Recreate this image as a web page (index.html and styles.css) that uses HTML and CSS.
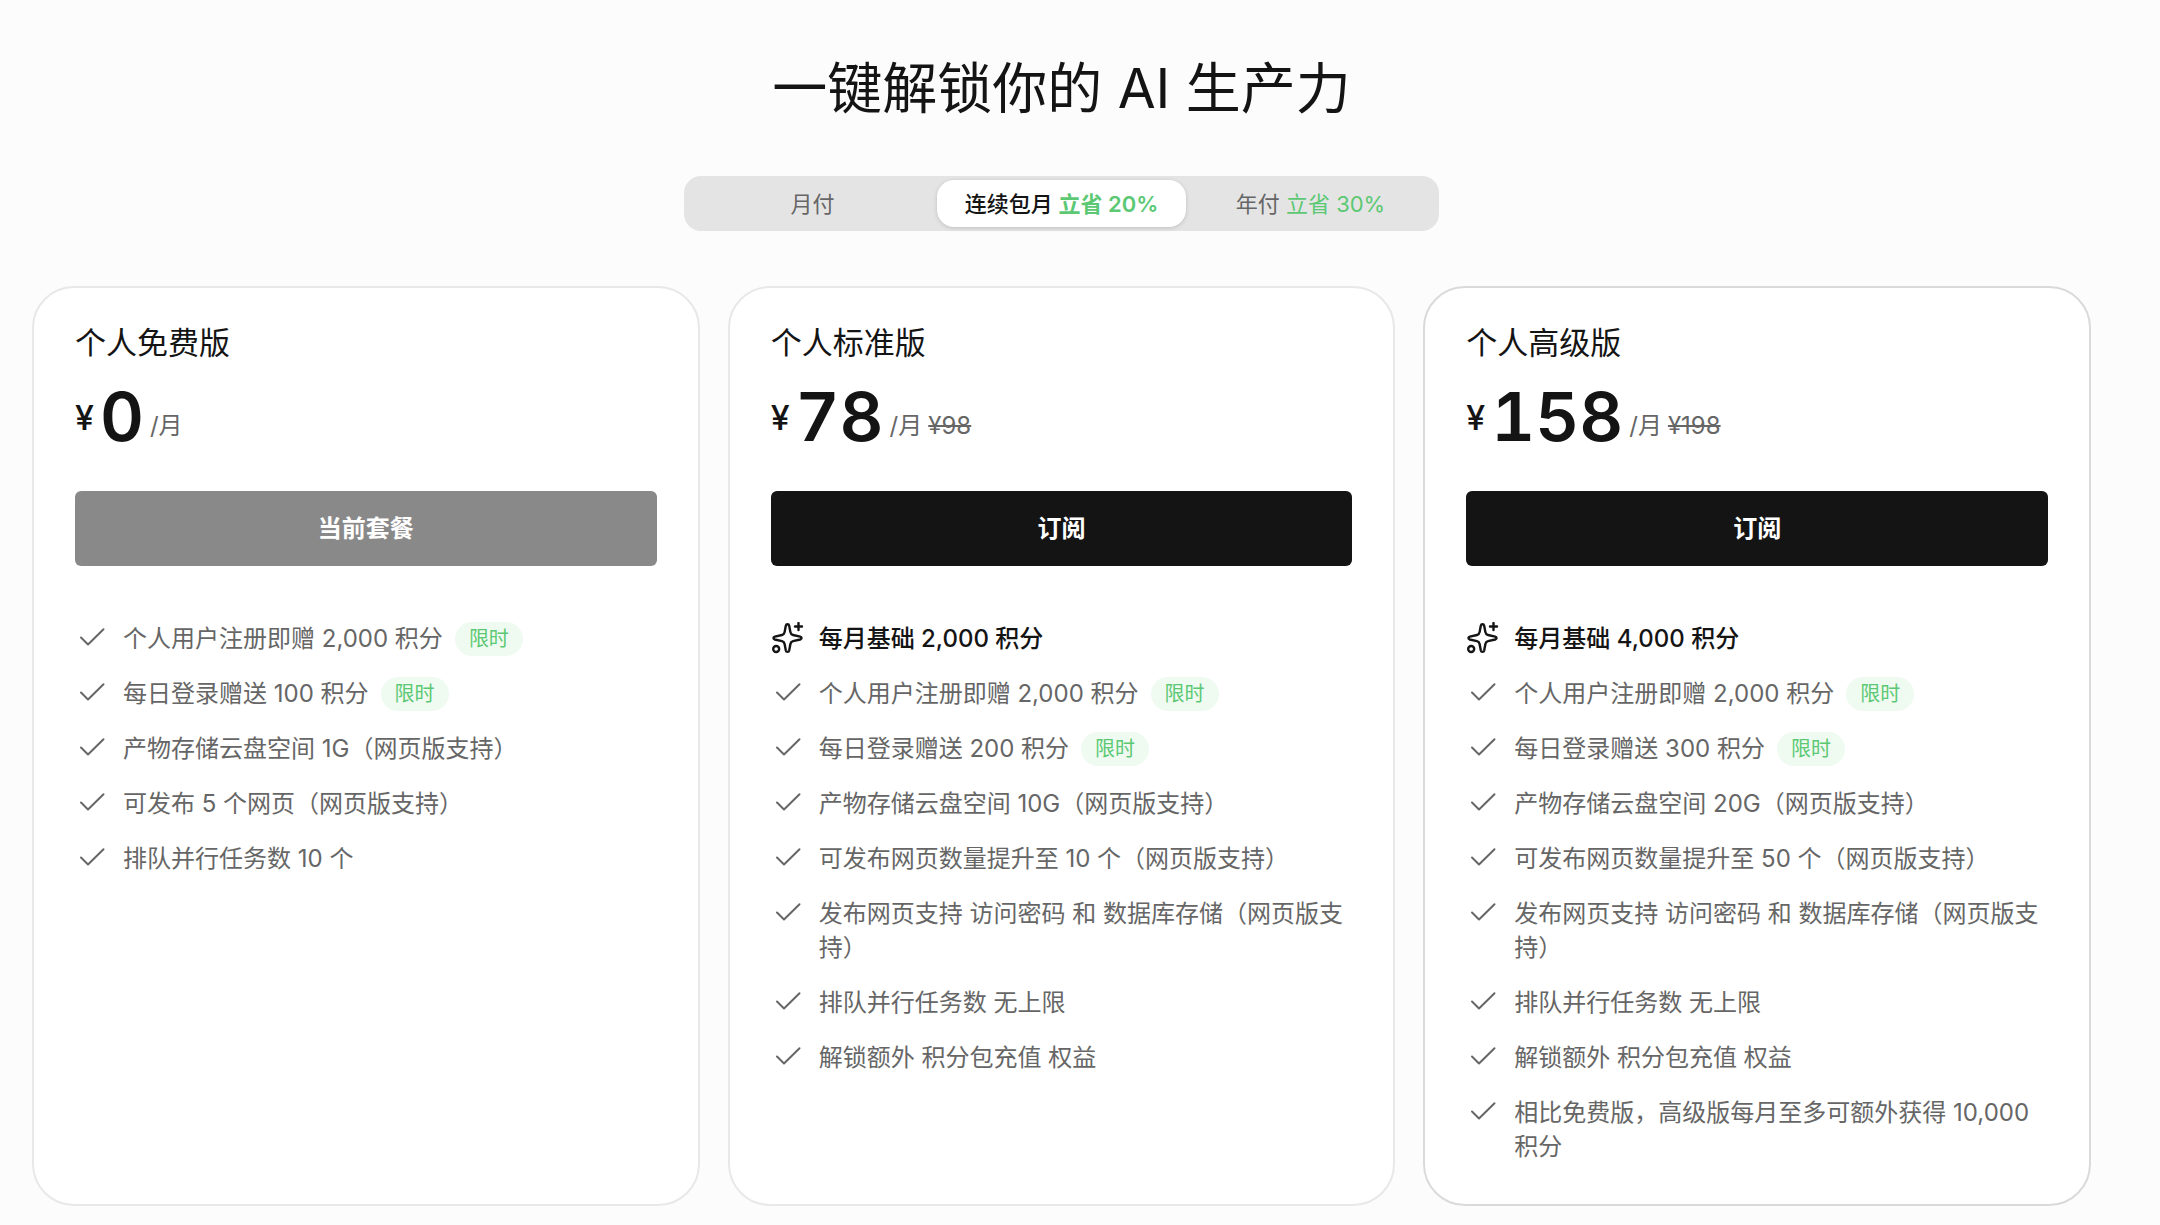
FILE: index.html
```html
<!DOCTYPE html>
<html lang="zh-CN">
<head>
<meta charset="utf-8">
<meta name="viewport" content="width=device-width, initial-scale=1">
<title>一键解锁你的 AI 生产力</title>
<link rel="stylesheet" href="styles.css">
</head>
<body>
<svg class="sprite" aria-hidden="true">
  <symbol id="check" viewBox="0 0 32 32"><path d="M5 15.500l7 7L27.500 7.200"/></symbol>
  <symbol id="spark" viewBox="0 0 32 32">
    <path d="M15.500 2.200c-.9 0-1.500.6-1.700 1.500l-1.200 6.400c-.3 1.700-.9 2.500-2.600 2.900l-7.200 1.700c-1.800.5-1.800 2.300 0 2.800l7.200 1.600c1.700.4 2.300 1.200 2.600 2.900l1.200 6.400c.4 1.900 3 1.900 3.400 0l1.200-6.400c.3-1.700.9-2.500 2.600-2.900l7.200-1.600c1.800-.5 1.800-2.300 0-2.800L21 13c-1.700-.4-2.300-1.200-2.600-2.900l-1.200-6.400c-.2-.9-.8-1.500-1.700-1.500z"/>
    <path d="M26.500 1v7M23 4.500h7"/>
    <circle cx="4.200" cy="27" r="3"/>
  </symbol>
</svg>
<main class="pricing">
  <h1 class="headline">一键解锁你的 AI 生产力</h1>
  <div class="billing" role="radiogroup" aria-label="付费方式">
    <label class="option"><input type="radio" name="billing"><span>月付</span></label>
    <label class="option"><input type="radio" name="billing" checked><span>连续包月 <em>立省 20%</em></span></label>
    <label class="option"><input type="radio" name="billing"><span>年付 <em>立省 30%</em></span></label>
  </div>
  <div class="plans">
    <section class="plan">
      <h2 class="name">个人免费版</h2>
      <div class="price"><span class="currency">¥</span><span class="amount">0</span><span class="unit">/月</span></div>
      <button class="action" type="button" disabled>当前套餐</button>
      <ul class="features">
        <li><svg class="icon"><use href="#check"/></svg><span>个人用户注册即赠 2,000 积分</span><span class="tag">限时</span></li>
        <li><svg class="icon"><use href="#check"/></svg><span>每日登录赠送 100 积分</span><span class="tag">限时</span></li>
        <li><svg class="icon"><use href="#check"/></svg><span>产物存储云盘空间 1G（网页版支持）</span></li>
        <li><svg class="icon"><use href="#check"/></svg><span>可发布 5 个网页（网页版支持）</span></li>
        <li><svg class="icon"><use href="#check"/></svg><span>排队并行任务数 10 个</span></li>
      </ul>
    </section>
    <section class="plan">
      <h2 class="name">个人标准版</h2>
      <div class="price"><span class="currency">¥</span><span class="amount">78</span><span class="unit">/月</span><s class="unit">¥98</s></div>
      <button class="action" type="button">订阅</button>
      <ul class="features">
        <li class="lead"><svg class="icon"><use href="#spark"/></svg><span>每月基础 2,000 积分</span></li>
        <li><svg class="icon"><use href="#check"/></svg><span>个人用户注册即赠 2,000 积分</span><span class="tag">限时</span></li>
        <li><svg class="icon"><use href="#check"/></svg><span>每日登录赠送 200 积分</span><span class="tag">限时</span></li>
        <li><svg class="icon"><use href="#check"/></svg><span>产物存储云盘空间 10G（网页版支持）</span></li>
        <li><svg class="icon"><use href="#check"/></svg><span>可发布网页数量提升至 10 个（网页版支持）</span></li>
        <li><svg class="icon"><use href="#check"/></svg><span>发布网页支持 访问密码 和 数据库存储（网页版支持）</span></li>
        <li><svg class="icon"><use href="#check"/></svg><span>排队并行任务数 无上限</span></li>
        <li><svg class="icon"><use href="#check"/></svg><span>解锁额外 积分包充值 权益</span></li>
      </ul>
    </section>
    <section class="plan premium">
      <h2 class="name">个人高级版</h2>
      <div class="price"><span class="currency">¥</span><span class="amount">158</span><span class="unit">/月</span><s class="unit">¥198</s></div>
      <button class="action" type="button">订阅</button>
      <ul class="features">
        <li class="lead"><svg class="icon"><use href="#spark"/></svg><span>每月基础 4,000 积分</span></li>
        <li><svg class="icon"><use href="#check"/></svg><span>个人用户注册即赠 2,000 积分</span><span class="tag">限时</span></li>
        <li><svg class="icon"><use href="#check"/></svg><span>每日登录赠送 300 积分</span><span class="tag">限时</span></li>
        <li><svg class="icon"><use href="#check"/></svg><span>产物存储云盘空间 20G（网页版支持）</span></li>
        <li><svg class="icon"><use href="#check"/></svg><span>可发布网页数量提升至 50 个（网页版支持）</span></li>
        <li><svg class="icon"><use href="#check"/></svg><span>发布网页支持 访问密码 和 数据库存储（网页版支持）</span></li>
        <li><svg class="icon"><use href="#check"/></svg><span>排队并行任务数 无上限</span></li>
        <li><svg class="icon"><use href="#check"/></svg><span>解锁额外 积分包充值 权益</span></li>
        <li><svg class="icon"><use href="#check"/></svg><span>相比免费版，高级版每月至多可额外获得 10,000 积分</span></li>
      </ul>
    </section>
  </div>
</main>
</body>
</html>
```
FILE: styles.css
```css
* {
  box-sizing: border-box;
}

body {
  margin: 0;
  background: #fcfcfc;
  color: #141414;
  font-family: Inter, "Noto Sans CJK SC", sans-serif;
  font-size: 24px;
  line-height: 34px;
}

.sprite {
  display: none;
}

.pricing {
  display: flex;
  flex-direction: column;
  align-items: center;
  padding: 48px 69px 20px 32px;
}

.headline {
  margin: 0 0 48px;
  font-size: 55px;
  font-weight: 400;
  line-height: 80px;
}

.billing {
  display: grid;
  grid-template-columns: repeat(3, 1fr);
  width: 755px;
  max-width: 100%;
  margin-bottom: 55px;
  padding: 4px;
  border-radius: 17px;
  background: #e4e4e4;
  color: #666;
  font-size: 22px;
}

.option {
  position: relative;
  display: flex;
  cursor: pointer;
}

.option input {
  position: absolute;
  inset: 0;
  margin: 0;
  opacity: 0;
}

.option span {
  flex: 1;
  padding: 7px 0 6px;
  border-radius: 17px;
  text-align: center;
}

.option em {
  color: #5bc873;
  font-style: normal;
}

.option input:checked + span {
  background: #fff;
  box-shadow: 0 1px 4px rgba(0, 0, 0, 0.16);
  color: #141414;
  font-weight: 500;
}

.option input:checked + span em {
  font-weight: 600;
}

.plans {
  display: grid;
  grid-template-columns: repeat(3, 1fr);
  gap: 28px;
  width: 100%;
}

.plan {
  padding: 35px 41px 40px;
  border: 2px solid #e8e8e8;
  border-radius: 42px;
  background: #fff;
}

.premium {
  border-color: #dadada;
}

.name {
  margin: 0 0 19px;
  font-size: 31px;
  font-weight: 400;
  line-height: 40px;
}

.price {
  display: flex;
  align-items: flex-end;
  gap: 6px;
  margin-bottom: 41px;
}

.currency {
  font-size: 34px;
  font-weight: 500;
  line-height: 64px;
}

.amount {
  font-size: 68px;
  font-variant-numeric: tabular-nums;
  font-weight: 600;
  line-height: 68px;
}

.unit {
  color: #666;
  line-height: 48px;
}

.action {
  display: block;
  width: 100%;
  height: 75px;
  margin-bottom: 56px;
  border: 0;
  border-radius: 6px;
  background: #141414;
  color: #fff;
  font: inherit;
  font-weight: 600;
}

.action:disabled {
  background: #898989;
}

.features {
  display: flex;
  flex-direction: column;
  gap: 21px;
  margin: 0;
  padding: 0;
  color: #666;
  list-style: none;
}

.features li {
  display: flex;
}

.icon {
  flex: none;
  width: 32px;
  height: 32px;
  margin: 0 15px 0 1px;
  fill: none;
  stroke: currentColor;
  stroke-width: 2;
  stroke-linecap: round;
  stroke-linejoin: round;
}

.tag {
  flex: none;
  margin-left: 12px;
  padding: 0 14px;
  border-radius: 17px;
  background: #effaf1;
  color: #5bc873;
  font-size: 20px;
}

.lead {
  color: #141414;
  font-weight: 500;
}

.lead .icon {
  stroke-width: 2.4;
}
```
